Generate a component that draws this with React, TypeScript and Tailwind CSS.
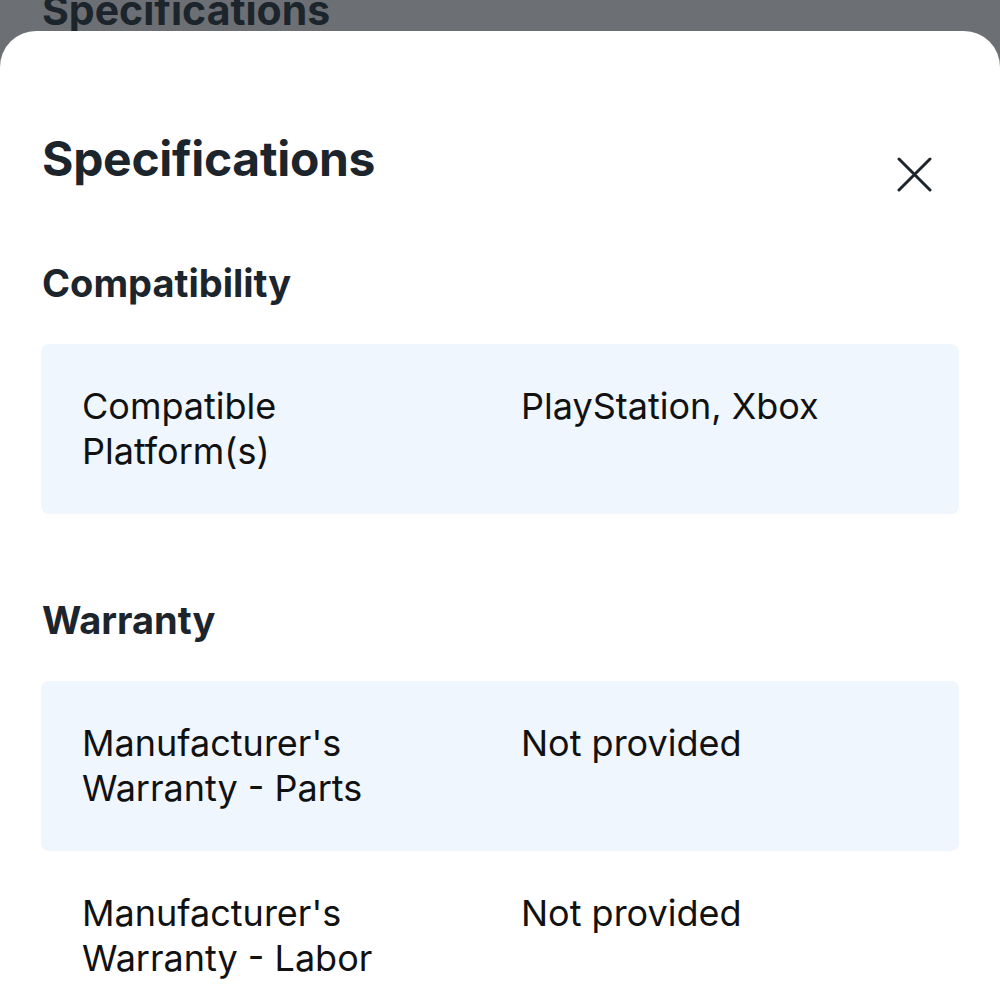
import React from 'react';

type Spec = { label: string; value: string };

const sections: { title: string; specs: Spec[] }[] = [
  {
    title: 'Compatibility',
    specs: [{ label: 'Compatible Platform(s)', value: 'PlayStation, Xbox' }],
  },
  {
    title: 'Warranty',
    specs: [
      { label: "Manufacturer's Warranty - Parts", value: 'Not provided' },
      { label: "Manufacturer's Warranty - Labor", value: 'Not provided' },
    ],
  },
];

const App: React.FC = () => {
  return (
    <div className="w-[1000px] h-[1000px] overflow-hidden bg-[#6c6f73] font-['Inter',sans-serif]">
      {/* page behind the sheet */}
      <div className="h-[31px] overflow-hidden px-[42px]">
        <div className="mt-[-15px] text-[41px] leading-[50px] font-bold text-[#1d252c]">Specifications</div>
      </div>

      <div className="bg-white rounded-t-[36px] h-[969px] px-[41px] pt-[100px]">
        <div className="flex justify-between items-start h-[56px] pl-px">
          <h1 className="text-[48px] leading-[56px] font-bold text-[#1d252c] tracking-[-0.3px]">Specifications</h1>
          <button className="mt-[26px] mr-[27px] text-[#1d252c]" aria-label="Close">
            <svg className="block" width="35" height="35" viewBox="0 0 35 35" fill="none" stroke="currentColor" strokeWidth="3" strokeLinecap="round">
              <path d="M2 2L33 33M33 2L2 33" />
            </svg>
          </button>
        </div>

        {sections.map((section, i) => (
          <div key={section.title} className={i === 0 ? 'mt-[74px]' : 'mt-[84px]'}>
            <h2 className="pl-px text-[38px] leading-[44px] font-bold text-[#1d252c]">{section.title}</h2>
            <div className="mt-[39px]">
              {section.specs.map((spec, idx) => (
                <div
                  key={spec.label}
                  className={`grid grid-cols-[439px_1fr] py-[40px] pl-[41px] rounded-[8px] text-[36px] leading-[45px] text-[#111] ${
                    idx % 2 === 0 ? 'bg-[#eff6fe]' : ''
                  }`}
                >
                  <div className="pr-[60px]">{spec.label}</div>
                  <div>{spec.value}</div>
                </div>
              ))}
            </div>
          </div>
        ))}
      </div>
    </div>
  );
};

export default App;
